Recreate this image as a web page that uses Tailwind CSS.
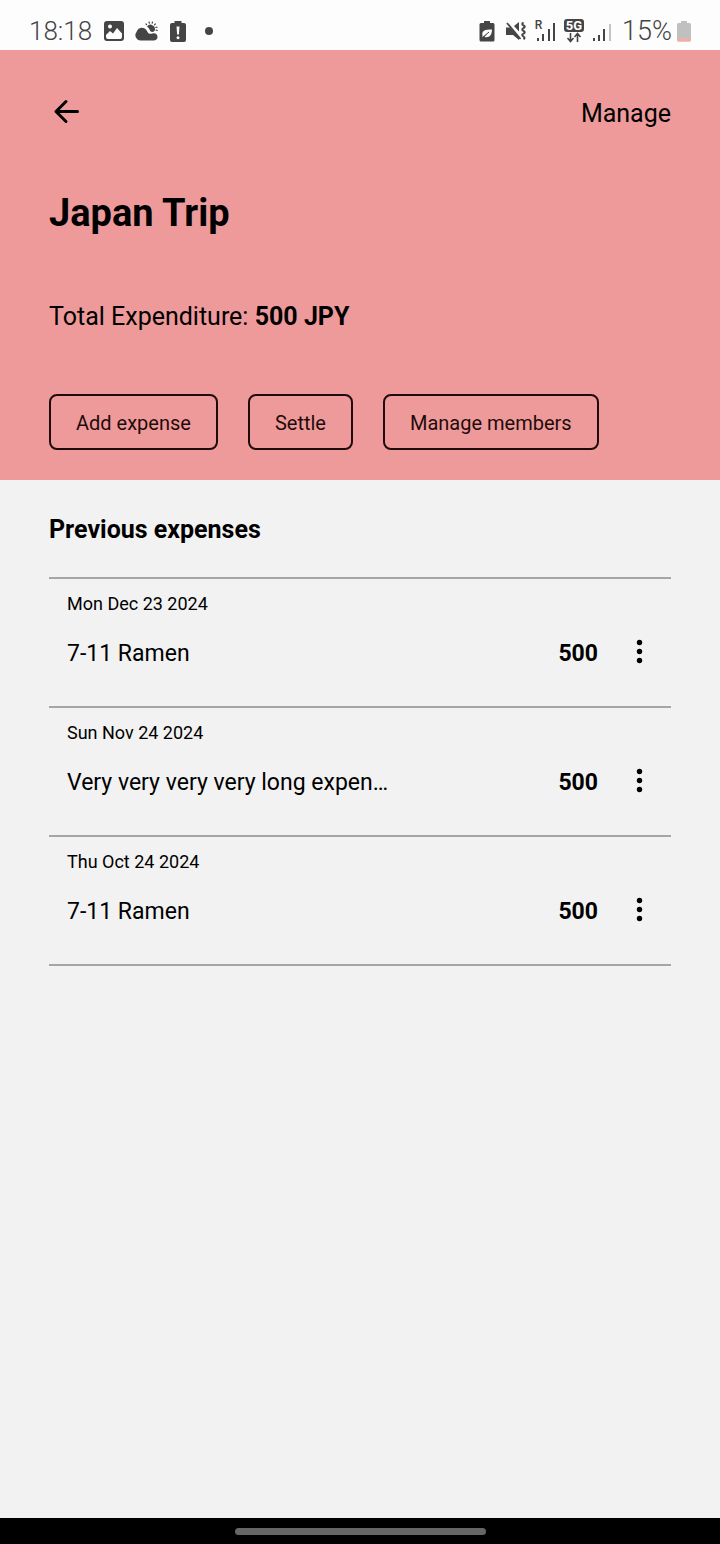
<!DOCTYPE html>
<html lang="en">
<head>
<meta charset="utf-8">
<meta name="viewport" content="width=device-width, initial-scale=1">
<title>Japan Trip</title>
<script src="https://cdn.jsdelivr.net/npm/@tailwindcss/browser@4"></script>
</head>
<body class="flex min-h-screen flex-col bg-[#f2f2f2] font-[Roboto,sans-serif] text-black">
  <div class="flex h-[50px] items-center justify-between bg-[#fdfdfd] pt-3 pr-7 pl-[29px] text-[#454545]">
    <div class="flex items-center gap-[10px]">
      <span class="mr-px text-[26px] leading-8 font-light">18:18</span>
      <!-- Picture -->
      <svg class="h-[22px] w-[22px]" viewBox="0 0 22 22" fill="#454545"><rect x="1" y="1" width="20" height="20" rx="3"/><path d="M3 15l4-4 3 2.500L14 8l5 5.500V17a2 2 0 0 1-2 2H5a2 2 0 0 1-2-2Z" fill="#fff"/><circle cx="7" cy="6.500" r="2" fill="#fff"/></svg>
      <!-- Weather -->
      <svg class="h-[22px] w-6" viewBox="0 0 24 22" fill="#454545"><path d="M6 20.500A5.300 5.300 0 0 1 1.500 12C3 7 10 6 12.500 12c1 2 3 2 5 1.500 2-.5 5 0 5 3.500 0 2-1.500 3.500-4 3.500Z"/><path d="M12 6.500A4.400 4.400 0 0 1 19.500 11c-2 1.500-4 1-4.500-.5a7 7 0 0 0-3-4Z"/><path d="M11 4l.6.700M14 2l.4 1.200M17.500 2l-.3 1.200M20.300 4l-.8.800M22 7.200l-1.200.3M22.200 10.300l-1-.1" stroke="#454545" stroke-width="1.200" stroke-linecap="round"/></svg>
      <!-- Battery warning -->
      <svg class="h-[22px] w-[18px]" viewBox="0 0 18 22" fill="#454545"><path d="M5.500 1h7v2H15a2 2 0 0 1 2 2v15a2 2 0 0 1-2 2H3a2 2 0 0 1-2-2V5a2 2 0 0 1 2-2h2.500Z"/><path d="M7.500 6.500h3l-.6 8H8.100ZM9 16.200a1.500 1.500 0 1 0 .01 0Z" fill="#fff"/></svg>
      <span class="ml-2 size-2 rounded-full bg-[#454545]"></span>
    </div>
    <div class="flex items-center">
      <!-- Battery saver -->
      <svg class="mr-[10px] h-[22px] w-4" viewBox="0 0 16 22" fill="#454545"><path d="M5 1h6v2h3a1.500 1.500 0 0 1 1.500 1.500V20a1.500 1.500 0 0 1-1.500 1.500H2A1.500 1.500 0 0 1 .5 20V4.500A1.500 1.500 0 0 1 2 3h3Z"/><path d="M3.500 15.500c-1-5 2-6 9.500-6 0 6-3 8.500-7.500 7.500L9 13l-5.500 4.500Z" fill="#fff"/><path d="M3.500 17.500L10 12" stroke="#454545" stroke-width="1"/></svg>
      <!-- Muted, vibrating -->
      <svg class="mr-2 h-[22px] w-[22px]" viewBox="0 0 22 22" fill="#454545"><path d="M1 7.500h4L14 16.500V20l-6-5H1ZM9 6l5-4v9.500Z"/><path d="M2 3l13.500 16" stroke="#454545" stroke-width="1.800"/><path d="M18.500 2.500q-2.500 1.500 0 3 2.500 1.300 0 2.700-2.500 1.300 0 2.800 2.500 1.300 0 2.700-2.500 1.300 0 2.800 2 1.300 0 2.700" fill="none" stroke="#454545" stroke-width="2"/></svg>
      <!-- Roaming signal -->
      <div class="relative mr-2 h-6 w-[21px]">
        <span class="absolute top-0 left-0 text-[12px] leading-3 font-medium">R</span>
        <svg class="h-6 w-[21px]" viewBox="0 0 21 24" fill="#454545"><path d="M2 19h2v3H2ZM7 15h2v7H7ZM13 10h2v12h-2ZM18 4h2v18h-2Z"/></svg>
      </div>
      <!-- 5G with data arrows -->
      <div class="mr-2 flex flex-col items-center">
        <span class="rounded-[3px] bg-[#454545] px-[2px] text-[13px] leading-[13px] font-bold text-white">5G</span>
        <svg class="h-[11px] w-4" viewBox="0 0 16 11" fill="none" stroke="#454545" stroke-width="1.600"><path d="M4.500 1v8M1.500 6l3 3.500 3-3.500M11.500 10V2M8.500 5l3-3.500 3 3.500"/></svg>
      </div>
      <svg class="mr-[10px] h-6 w-5" viewBox="0 0 20 24" fill="#454545"><path d="M1 19h2v3H1ZM6 16h2v6H6ZM11 10h2v12h-2Z"/><path d="M17 5h2v17h-2Z" fill="#c4c4c4"/></svg>
      <span class="mr-1 text-[27px] leading-8 font-light">15%</span>
      <svg class="h-[22px] w-4" viewBox="0 0 16 22"><path d="M5 1h6v2h2.500A1.500 1.500 0 0 1 15 4.500V20a1.500 1.500 0 0 1-1.500 1.500h-11A1.500 1.500 0 0 1 1 20V4.500A1.500 1.500 0 0 1 2.500 3H5Z" fill="#c0c0c0"/><path d="M1 18.500h14V20a1.500 1.500 0 0 1-1.500 1.500h-11A1.500 1.500 0 0 1 1 20Z" fill="#f3b0a2"/></svg>
    </div>
  </div>

  <header class="bg-[#ef9a9a] px-[49px] pt-[43px] pb-[30px]">
    <div class="flex items-center justify-between">
      <button type="button" aria-label="Back" class="-ml-1">
        <svg class="size-[42px]" viewBox="0 0 42 42" fill="none" stroke="#000" stroke-width="3" stroke-linecap="round" stroke-linejoin="round"><path d="M32.500 18.500H11M21 8.500l-10 10 10 10"/></svg>
      </button>
      <button type="button" class="text-[25px] leading-8">Manage</button>
    </div>
    <h1 class="mt-14 text-[38px] leading-11 font-bold">Japan Trip</h1>
    <p class="mt-[66px] text-[25px] leading-8">Total Expenditure: <strong class="font-bold">500 JPY</strong></p>
    <div class="mt-[61px] flex gap-[30px]">
      <button type="button" class="h-14 rounded-lg border-2 border-[#1f0b0b] px-[25px] pt-[2px] text-[20px] text-[#1f0b0b]">Add expense</button>
      <button type="button" class="h-14 rounded-lg border-2 border-[#1f0b0b] px-[25px] pt-[2px] text-[20px] text-[#1f0b0b]">Settle</button>
      <button type="button" class="h-14 rounded-lg border-2 border-[#1f0b0b] px-[25px] pt-[2px] text-[20px] text-[#1f0b0b]">Manage members</button>
    </div>
  </header>

  <main class="grow px-[49px] pt-[34px]">
    <h2 class="text-[25px] leading-8 font-bold">Previous expenses</h2>
    <ul class="mt-[31px] border-t-2 border-[#a5a5a5]">
      <li class="h-[129px] border-b-2 border-[#a5a5a5] px-[18px] pt-[13px]">
        <p class="text-[18px] leading-6">Mon Dec 23 2024</p>
        <div class="mt-5 flex items-center text-[23px]">
          <span class="w-[325px] truncate">7-11 Ramen</span>
          <strong class="ml-auto font-bold">500</strong>
          <button type="button" aria-label="Options for 7-11 Ramen" class="ml-[27px]"><svg class="h-9 w-7" viewBox="0 0 28 36"><circle cx="14.500" cy="6.500" r="2.700"/><circle cx="14.500" cy="15.500" r="2.700"/><circle cx="14.500" cy="24.500" r="2.700"/></svg></button>
        </div>
      </li>
      <li class="h-[129px] border-b-2 border-[#a5a5a5] px-[18px] pt-[13px]">
        <p class="text-[18px] leading-6">Sun Nov 24 2024</p>
        <div class="mt-5 flex items-center text-[23px]">
          <span class="w-[325px] truncate">Very very very very long expense</span>
          <strong class="ml-auto font-bold">500</strong>
          <button type="button" aria-label="Options for long expense" class="ml-[27px]"><svg class="h-9 w-7" viewBox="0 0 28 36"><circle cx="14.500" cy="6.500" r="2.700"/><circle cx="14.500" cy="15.500" r="2.700"/><circle cx="14.500" cy="24.500" r="2.700"/></svg></button>
        </div>
      </li>
      <li class="h-[129px] border-b-2 border-[#a5a5a5] px-[18px] pt-[13px]">
        <p class="text-[18px] leading-6">Thu Oct 24 2024</p>
        <div class="mt-5 flex items-center text-[23px]">
          <span class="w-[325px] truncate">7-11 Ramen</span>
          <strong class="ml-auto font-bold">500</strong>
          <button type="button" aria-label="Options for 7-11 Ramen" class="ml-[27px]"><svg class="h-9 w-7" viewBox="0 0 28 36"><circle cx="14.500" cy="6.500" r="2.700"/><circle cx="14.500" cy="15.500" r="2.700"/><circle cx="14.500" cy="24.500" r="2.700"/></svg></button>
        </div>
      </li>
    </ul>
  </main>

  <footer class="flex h-[26px] items-center justify-center bg-black">
    <div class="h-[7px] w-[251px] rounded-full bg-[#666]"></div>
  </footer>
</body>
</html>
